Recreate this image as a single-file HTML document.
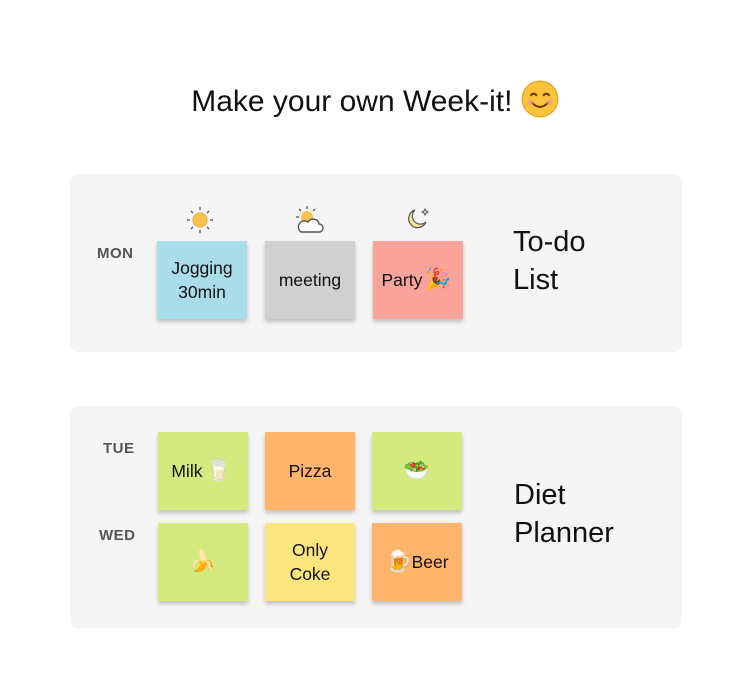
<!DOCTYPE html>
<html><head><style>
body{margin:0;width:750px;height:700px;background:#fff;font-family:"Liberation Sans","Noto Sans CJK KR",sans-serif;position:relative;overflow:hidden}
.t{position:absolute;left:0;width:750px;top:80px;text-align:center;font-size:30px;color:#111}
.p{position:absolute;left:70px;width:612px;background:#f5f5f5;border-radius:8px}
.c{position:absolute;width:90px;height:78px;display:flex;align-items:center;justify-content:center;text-align:center;font-size:17.5px;line-height:24px;color:#111;box-shadow:0 3px 4px rgba(0,0,0,.22)}
.d{position:absolute;font-size:15px;font-weight:bold;color:#555;letter-spacing:.5px}
.b{position:absolute;font-size:29px;line-height:38px;color:#111}
.e{font-family:"Noto Color Emoji","DejaVu Sans",sans-serif;font-size:21px;margin:0 3px}
</style></head><body>
<div class="t">Make your own Week-it! <svg width="38" height="38" viewBox="0 0 36 36" style="vertical-align:-7px"><circle cx="18" cy="18" r="17" fill="#fcc43c" stroke="#e59a1a"/><path d="M9 15q3-4 6 0M21 15q3-4 6 0" stroke="#6b3d10" stroke-width="2" fill="none"/><path d="M10 21q8 9 16 0" stroke="#6b3d10" stroke-width="2" fill="none"/><circle cx="9" cy="21" r="3" fill="#f59a8a" opacity=".6"/><circle cx="27" cy="21" r="3" fill="#f59a8a" opacity=".6"/></svg></div>

<div class="p" style="top:174px;height:178px"></div>
<div class="d" style="left:97px;top:245px">MON</div>
<svg style="position:absolute;left:186px;top:206px" width="28" height="28" viewBox="0 0 28 28"><circle cx="14" cy="14" r="7" fill="#fbc34e" stroke="#e8a93a"/><g stroke="#555" stroke-width="1.3"><path d="M14 1v3M14 24v3M1 14h3M24 14h3M5 5l2 2M21 21l2 2M5 23l2-2M21 7l2-2"/></g></svg>
<svg style="position:absolute;left:293px;top:205px" width="32" height="30" viewBox="0 0 32 30"><circle cx="14" cy="12" r="6" fill="#fbc34e"/><g stroke="#555" stroke-width="1.3"><path d="M14 1v3M3 12h3M6 4l2 2M22 4l-2 2"/></g><path d="M8 27h18a4 4 0 0 0 0-8a6 6 0 0 0-11-2a5 5 0 0 0-7 10z" fill="#fff" stroke="#555" stroke-width="1.4"/></svg>
<svg style="position:absolute;left:405px;top:207px" width="26" height="24" viewBox="0 0 26 24"><path d="M10 3a9 9 0 1 0 11 12a8 8 0 0 1-11-12z" fill="#f8e59a" stroke="#555" stroke-width="1.2"/><path d="M20 2l1 2 2 1-2 1-1 2-1-2-2-1 2-1z" fill="none" stroke="#555"/></svg>
<div class="c" style="left:157px;top:241px;background:#a8dde9">Jogging<br>30min</div>
<div class="c" style="left:265px;top:241px;background:#d0d0d0">meeting</div>
<div class="c" style="left:373px;top:241px;background:#f9a39a">Party<span class="e">🎉</span></div>
<div class="b" style="left:513px;top:223px">To-do<br>List</div>

<div class="p" style="top:406px;height:222px"></div>
<div class="d" style="left:103px;top:440px">TUE</div>
<div class="d" style="left:99px;top:527px">WED</div>
<div class="c" style="left:158px;top:432px;background:#d4ea7e">Milk<span class="e">🥛</span></div>
<div class="c" style="left:265px;top:432px;background:#ffb46c">Pizza</div>
<div class="c" style="left:372px;top:432px;background:#d4ea7e"><span class="e">🥗</span></div>
<div class="c" style="left:158px;top:523px;background:#d4ea7e"><span class="e">🍌</span></div>
<div class="c" style="left:265px;top:523px;background:#ffe57d">Only<br>Coke</div>
<div class="c" style="left:372px;top:523px;background:#ffb46c"><span class="e" style="margin:0">🍺</span>Beer</div>
<div class="b" style="left:514px;top:476px">Diet<br>Planner</div>
</body></html>
